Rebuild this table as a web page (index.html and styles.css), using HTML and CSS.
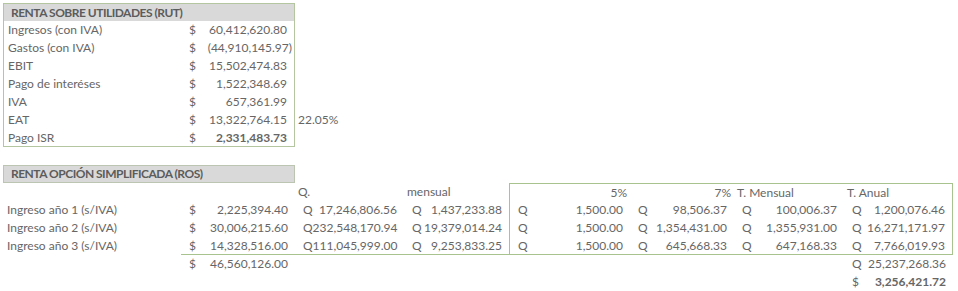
FILE: index.html
```html
<!DOCTYPE html>
<html lang="es">
<head>
<meta charset="utf-8">
<title>Renta</title>
<link rel="stylesheet" href="styles.css">
</head>
<body>
<div class="sheet">
  <section class="rut">
    <div class="rut-box">
      <div class="hdr">RENTA SOBRE UTILIDADES (RUT)</div>
      <div class="lbl">Ingresos (con IVA)</div><div class="acc"><span>$</span><span>60,412,620.80</span></div>
      <div class="lbl">Gastos (con IVA)</div><div class="acc"><span>$</span><span class="neg">(44,910,145.97)</span></div>
      <div class="lbl">EBIT</div><div class="acc"><span>$</span><span>15,502,474.83</span></div>
      <div class="lbl">Pago de interéses</div><div class="acc"><span>$</span><span>1,522,348.69</span></div>
      <div class="lbl">IVA</div><div class="acc"><span>$</span><span>657,361.99</span></div>
      <div class="lbl">EAT</div><div class="acc"><span>$</span><span>13,322,764.15</span></div>
      <div class="lbl">Pago ISR</div><div class="acc"><span>$</span><span class="bold">2,331,483.73</span></div>
    </div>
    <div class="pct">22.05%</div>
  </section>

  <section class="ros">
    <div class="hdr ros-hdr">RENTA OPCIÓN SIMPLIFICADA (ROS)</div>

    <div class="lbl c1 r2"></div>
    <div class="c2 r2"></div>
    <div class="txt c3 r2">Q.</div>
    <div class="txt c4 r2">mensual</div>

    <div class="lbl c1 r3">Ingreso año 1 (s/IVA)</div>
    <div class="acc c2 r3"><span>$</span><span>2,225,394.40</span></div>
    <div class="acc c3 r3"><span>Q</span><span>17,246,806.56</span></div>
    <div class="acc c4 r3"><span>Q</span><span>1,437,233.88</span></div>

    <div class="lbl c1 r4">Ingreso año 2 (s/IVA)</div>
    <div class="acc c2 r4"><span>$</span><span>30,006,215.60</span></div>
    <div class="acc tight c3 r4"><span>Q</span><span>232,548,170.94</span></div>
    <div class="acc tight c4 r4"><span>Q</span><span>19,379,014.24</span></div>

    <div class="lbl c1 r5">Ingreso año 3 (s/IVA)</div>
    <div class="acc line c2 r5"><span>$</span><span>14,328,516.00</span></div>
    <div class="acc tight line c3 r5"><span>Q</span><span>111,045,999.00</span></div>
    <div class="acc line c4 r5"><span>Q</span><span>9,253,833.25</span></div>

    <div class="green-box">
      <div class="txt right">5%</div>
      <div class="txt right">7%</div>
      <div class="txt">T. Mensual</div>
      <div class="txt">T. Anual</div>

      <div class="acc"><span>Q</span><span>1,500.00</span></div>
      <div class="acc"><span>Q</span><span>98,506.37</span></div>
      <div class="acc"><span>Q</span><span>100,006.37</span></div>
      <div class="acc"><span>Q</span><span>1,200,076.46</span></div>

      <div class="acc"><span>Q</span><span>1,500.00</span></div>
      <div class="acc"><span>Q</span><span>1,354,431.00</span></div>
      <div class="acc"><span>Q</span><span>1,355,931.00</span></div>
      <div class="acc"><span>Q</span><span>16,271,171.97</span></div>

      <div class="acc"><span>Q</span><span>1,500.00</span></div>
      <div class="acc"><span>Q</span><span>645,668.33</span></div>
      <div class="acc"><span>Q</span><span>647,168.33</span></div>
      <div class="acc"><span>Q</span><span>7,766,019.93</span></div>
    </div>

    <div class="acc c2 r6"><span>$</span><span>46,560,126.00</span></div>
    <div class="acc c8 r6"><span>Q</span><span>25,237,268.36</span></div>
    <div class="acc c8 r7"><span>$</span><span class="bold">3,256,421.72</span></div>
  </section>
</div>
</body>
</html>
```

FILE: styles.css
```css
* { box-sizing: border-box; }

html, body {
  margin: 0;
  padding: 0;
  background: #ffffff;
}

body {
  font-family: Lato, "Liberation Sans", Arial, sans-serif;
  font-size: 12px;
  color: #666666;
}

.sheet {
  padding: 3px 0 0 3px;
  width: 958px;
}

/* ---------- RUT ---------- */
.rut {
  display: grid;
  grid-template-columns: 292px 109px;
  grid-template-rows: repeat(8, 18px);
}

.rut-box {
  grid-column: 1;
  grid-row: 1 / 9;
  border: 1px solid #b4c6a0;
  display: grid;
  grid-template-columns: 177px 113px;
  grid-template-rows: 17px repeat(6, 18px) 17px;
}

.rut-box .hdr {
  grid-column: 1 / 3;
}

.pct {
  grid-column: 2;
  grid-row: 7;
  padding-left: 3px;
  line-height: 18px;
}

/* ---------- common cells ---------- */
.hdr {
  background: #d9d9d9;
  color: #5c5c5c;
  font-weight: bold;
  font-size: 12px;
  letter-spacing: -0.5px;
  padding-left: 7px;
  line-height: 17px;
  white-space: nowrap;
}

.lbl {
  padding-left: 4px;
  line-height: 18px;
  white-space: nowrap;
}

.txt {
  padding-left: 3px;
  line-height: 18px;
  white-space: nowrap;
}

.txt.right {
  text-align: right;
  padding: 0 3px 0 0;
}

.acc {
  display: flex;
  justify-content: space-between;
  padding: 0 7px 0 8px;
  line-height: 18px;
  white-space: nowrap;
}

.acc.tight {
  justify-content: flex-start;
}

.acc.tight span:last-child {
  margin-left: auto;
}

.neg {
  margin-right: -5px;
}

.bold {
  font-weight: bold;
}

/* ---------- ROS ---------- */
.ros {
  margin-top: 18px;
  display: grid;
  grid-template-columns: 178px 114px 109px 105px 121px 104px 110px 109px;
  grid-template-rows: repeat(7, 18px);
}

.ros-hdr {
  grid-column: 1 / 3;
  grid-row: 1;
  border: 1px solid #bcc4b2;
  line-height: 16px;
}

.c1 { grid-column: 1; }
.c2 { grid-column: 2; }
.c3 { grid-column: 3; }
.c4 { grid-column: 4; }
.c8 { grid-column: 8; }

.r2 { grid-row: 2; }
.r3 { grid-row: 3; }
.r4 { grid-row: 4; }
.r5 { grid-row: 5; }
.r6 { grid-row: 6; }
.r7 { grid-row: 7; }

.line {
  border-bottom: 1px solid #a9c38e;
  line-height: 17px;
}

.green-box {
  grid-column: 5 / 9;
  grid-row: 2 / 6;
  border: 1px solid #a9c38e;
  display: grid;
  grid-template-columns: 120px 104px 110px 108px;
  grid-template-rows: 17px 18px 18px 17px;
}

.green-box .txt,
.green-box .acc {
  line-height: 17px;
}
```
